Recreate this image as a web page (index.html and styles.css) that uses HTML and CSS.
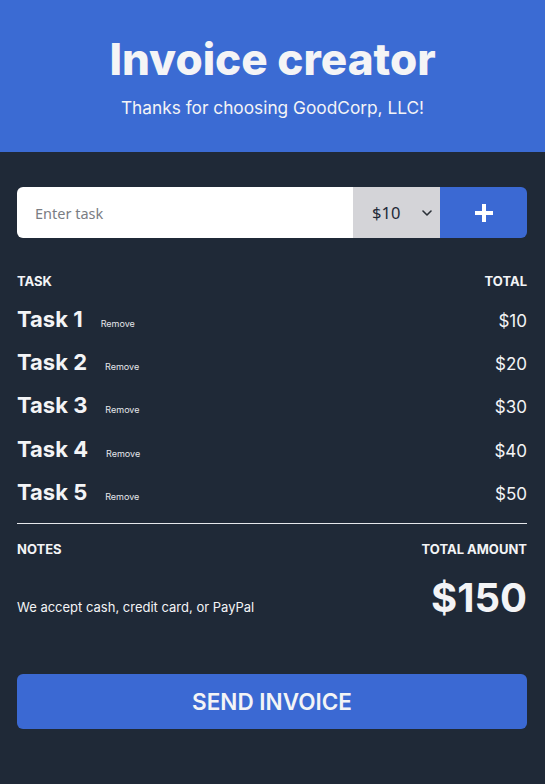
FILE: index.html
```html
<!DOCTYPE html>
<html lang="en">
<head>
<meta charset="utf-8">
<title>Invoice creator</title>
<link rel="stylesheet" href="styles.css">
</head>
<body>
<header class="hero">
  <h1 class="hero-title">Invoice creator</h1>
  <p class="hero-sub">Thanks for choosing GoodCorp, LLC!</p>
</header>
<main class="invoice">
  <form class="add-form">
    <input class="task-input" type="text" placeholder="Enter task">
    <div class="select-wrap">
      <select class="price-select">
        <option>$10</option>
        <option>$20</option>
        <option>$30</option>
      </select>
      <svg class="chevron" width="10" height="6" viewBox="0 0 10 6"><path d="M1 1l4 4 4-4" fill="none" stroke="#2b3038" stroke-width="1.6" stroke-linecap="round" stroke-linejoin="round"/></svg>
    </div>
    <button class="add-btn" type="button" aria-label="Add">
      <svg width="20" height="20" viewBox="0 0 20 20"><path d="M10 1v18M1 10h18" stroke="#ffffff" stroke-width="4"/></svg>
    </button>
  </form>

  <div class="table-head"><span>TASK</span><span>TOTAL</span></div>

  <ul class="task-list">
    <li class="task-row"><div class="task-info"><span class="task-name">Task 1</span><button class="remove-btn" type="button">Remove</button></div><span class="task-price">$10</span></li>
    <li class="task-row"><div class="task-info"><span class="task-name">Task 2</span><button class="remove-btn" type="button">Remove</button></div><span class="task-price">$20</span></li>
    <li class="task-row"><div class="task-info"><span class="task-name">Task 3</span><button class="remove-btn" type="button">Remove</button></div><span class="task-price">$30</span></li>
    <li class="task-row"><div class="task-info"><span class="task-name">Task 4</span><button class="remove-btn" type="button">Remove</button></div><span class="task-price">$40</span></li>
    <li class="task-row"><div class="task-info"><span class="task-name">Task 5</span><button class="remove-btn" type="button">Remove</button></div><span class="task-price">$50</span></li>
  </ul>

  <hr class="divider">

  <div class="summary-head"><span>NOTES</span><span>TOTAL AMOUNT</span></div>
  <div class="summary-body">
    <p class="notes">We accept cash, credit card, or PayPal</p>
    <span class="grand-total">$150</span>
  </div>

  <button class="send-btn" type="button">SEND INVOICE</button>
</main>
</body>
</html>
```
FILE: styles.css
```css
* { box-sizing: border-box; }
html, body {
  margin: 0;
  padding: 0;
  background: #1f2937;
}
body {
  font-family: Inter, "Noto Sans", sans-serif;
  color: #f3f4f6;
  min-height: 100vh;
}
.hero {
  background: #3b6bd3;
  text-align: center;
  padding: 31px 16px 33.5px;
}
.hero-title {
  margin: 0;
  font-size: 44px;
  line-height: 56px;
  font-weight: 800;
  color: #f4f4f6;
}
.hero-sub {
  margin: 9.5px 0 0;
  font-size: 17.3px;
  line-height: 22px;
  font-weight: 400;
  color: #f4f4f6;
}
.invoice {
  padding: 35px 18px 40px 17px;
}
.add-form {
  display: flex;
  height: 51px;
  border-radius: 6px;
  overflow: hidden;
}
.task-input {
  flex: 1;
  min-width: 0;
  border: 0;
  outline: none;
  background: #ffffff;
  padding: 0 18px;
  font-family: "Noto Sans", sans-serif;
  font-size: 14.5px;
  color: #1f2937;
}
.task-input::placeholder { color: #7a7d83; }
.select-wrap {
  position: relative;
  width: 87px;
  background: #d4d4d8;
}
.price-select {
  appearance: none;
  -webkit-appearance: none;
  width: 100%;
  height: 100%;
  border: 0;
  outline: none;
  background: transparent;
  padding: 0 0 0 19px;
  font-family: "Noto Sans", sans-serif;
  font-size: 16.5px;
  color: #1f2937;
}
.chevron {
  position: absolute;
  right: 8px;
  top: 23px;
  pointer-events: none;
}
.add-btn {
  width: 87px;
  border: 0;
  background: #3b69d3;
  display: flex;
  align-items: center;
  justify-content: center;
  padding: 0;
}
.table-head, .summary-head {
  display: flex;
  justify-content: space-between;
  font-size: 13px;
  line-height: 16px;
  font-weight: 700;
  color: #f3f4f6;
}
.table-head { margin-top: 35.25px; }
.task-list {
  list-style: none;
  margin: 16.25px 0 0;
  padding: 0;
  display: flex;
  flex-direction: column;
  gap: 16.4px;
}
.task-row {
  display: flex;
  justify-content: space-between;
  align-items: baseline;
  height: 27px;
  line-height: 27px;
}
.task-info {
  display: flex;
  align-items: baseline;
  height: 27px;
}
.task-name {
  font-size: 22px;
  font-weight: 700;
}
.remove-btn {
  margin-left: 18px;
  padding: 0;
  border: 0;
  background: none;
  color: #e5e7eb;
  font-family: Inter, sans-serif;
  font-size: 9px;
  line-height: 11px;
}
.task-price {
  font-size: 17px;
  font-weight: 400;
}
.divider {
  margin: 16.5px 0 0;
  border: 0;
  border-top: 1px solid #e5e7eb;
  height: 0;
}
.summary-head { margin-top: 17.25px; }
.summary-body {
  display: flex;
  justify-content: space-between;
  align-items: baseline;
  margin-top: 17.2px;
}
.notes {
  margin: 0;
  font-size: 13px;
  line-height: 16px;
}
.grand-total {
  font-size: 40px;
  line-height: 48px;
  font-weight: 700;
}
.send-btn {
  display: block;
  width: 100%;
  height: 55px;
  margin-top: 51.6px;
  border: 0;
  border-radius: 6px;
  background: #3b69d3;
  color: #f3f4f6;
  font-family: Inter, sans-serif;
  font-size: 22.5px;
  font-weight: 600;
}
```
